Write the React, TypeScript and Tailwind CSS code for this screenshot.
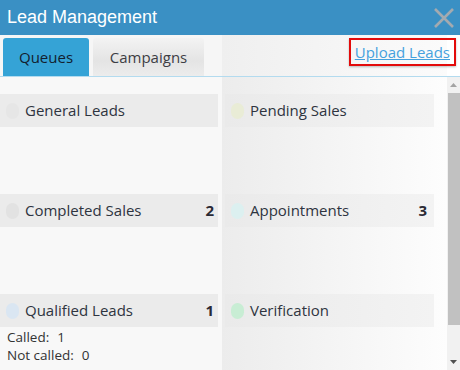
import React from 'react';

type Queue = {
  name: string;
  dot: string;
  count?: number;
  stats?: { label: string; value: number }[];
};

const queues: Queue[] = [
  { name: 'General Leads', dot: 'bg-[#e6e6e6]' },
  { name: 'Pending Sales', dot: 'bg-[#e9ecd6]' },
  { name: 'Completed Sales', dot: 'bg-[#e2e2e2]', count: 2 },
  { name: 'Appointments', dot: 'bg-[#dcf0f0]', count: 3 },
  {
    name: 'Qualified Leads',
    dot: 'bg-[#dae6f2]',
    count: 1,
    stats: [
      { label: 'Called:', value: 1 },
      { label: 'Not called:', value: 0 },
    ],
  },
  { name: 'Verification', dot: 'bg-[#c8edd4]' },
];

function QueueCard({ q, right }: { q: Queue; right: boolean }) {
  return (
    <div className={right ? 'h-[100px] pl-[3px] pr-[13px]' : 'h-[100px] pr-[4px]'}>
      <div
        className={
          right
            ? 'h-[33px] flex items-center pl-[6px] pr-[7px] bg-[linear-gradient(to_right,#eaeaea,#f3f3f3)]'
            : 'h-[33px] flex items-center pl-[6px] pr-[4px] bg-[#ebebeb]'
        }
      >
        <span className={`w-[13px] h-[16px] rounded-full ${q.dot}`} />
        <span className="ml-[6px] text-[15px] text-[#2e3440] flex-1">{q.name}</span>
        {q.count !== undefined && (
          <span className="text-[15px] font-bold text-[#2a2a35]">{q.count}</span>
        )}
      </div>
      {q.stats && (
        <div className="pl-[7px] pt-[1px] text-[13.5px] leading-[18px] text-[#333]">
          {q.stats.map((s) => (
            <div key={s.label}>
              {s.label}
              <span className="ml-[8px]">{s.value}</span>
            </div>
          ))}
        </div>
      )}
    </div>
  );
}

export default function App() {
  return (
    <div className="w-[460px] h-[370px] overflow-hidden bg-white font-['Open_Sans',sans-serif]">
      {/* title bar */}
      <div className="h-[35px] bg-[#3a90c4] flex items-center justify-between pl-[7px] pr-[5px]">
        <h1 className="font-['Liberation_Sans',Arial,sans-serif] text-[18px] text-white">
          Lead Management
        </h1>
        <svg width="22" height="22" viewBox="0 0 22 22" className="mt-[1px]">
          <path d="M2 2 L20 20 M20 2 L2 20" stroke="#a3aab0" strokeWidth="2.6" />
        </svg>
      </div>

      {/* tabs */}
      <div className="h-[42px] flex items-end bg-[linear-gradient(to_right,#f6f6f6_0,#f6f6f6_222px,#efefef_222px,#fbfbfb_447px,#ffffff_447px)]">
        <div className="flex-1 flex items-end justify-between h-full pl-[3px] border-b border-[#b3dbef]">
          <div className="flex gap-[4px]">
            <button className="w-[86px] h-[38px] rounded-t-[3px] bg-[#35a3d6] text-[15px] text-[#13202e]">
              Queues
            </button>
            <button className="w-[111px] h-[38px] rounded-t-[3px] bg-[linear-gradient(#f3f3f3,#e4e4e4_60%,#ececec)] text-[15px] text-[#3d3d44]">
              Campaigns
            </button>
          </div>
          <a
            href="#"
            className="self-start mt-[3px] mr-[4px] h-[28px] px-[4px] flex items-center border-2 border-[#e30b0b] shadow-[0_1px_2px_rgba(0,0,0,0.25)] text-[15px] text-[#45a1de] underline"
          >
            Upload Leads
          </a>
        </div>
      </div>

      {/* queues */}
      <div className="flex h-[293px]">
        <div className="w-[447px] grid grid-cols-[222px_225px] pt-[17px] bg-[linear-gradient(to_right,#f8f8f8_0,#f8f8f8_222px,#ececec_222px,#fdfdfd_447px)]">
          {queues.map((q, i) => (
            <QueueCard key={q.name} q={q} right={i % 2 === 1} />
          ))}
        </div>
        <div className="w-[13px] bg-[#f1f1f1] flex flex-col items-center">
          <svg width="7" height="4" viewBox="0 0 7 4" className="mt-[6px]">
            <path d="M0 4 L3.5 0 L7 4 Z" fill="#a3a3a3" />
          </svg>
          <div className="w-[12px] h-[232px] mt-[6px] bg-[#c1c1c1]" />
          <div className="flex-1" />
          <svg width="7" height="4" viewBox="0 0 7 4" className="mb-[6px]">
            <path d="M0 0 L7 0 L3.5 4 Z" fill="#505050" />
          </svg>
        </div>
      </div>
    </div>
  );
}
